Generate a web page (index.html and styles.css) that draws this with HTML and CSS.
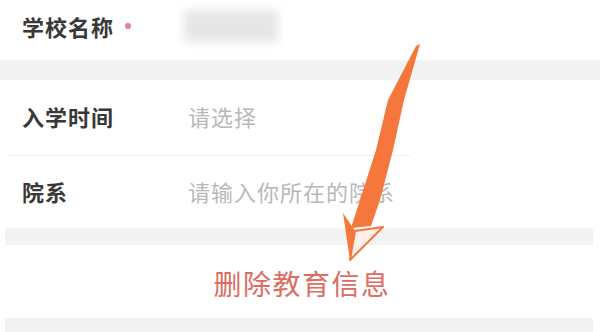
FILE: index.html
```html
<!DOCTYPE html>
<html lang="zh-CN">
<head>
<meta charset="utf-8">
<title>教育信息</title>
<link rel="stylesheet" href="styles.css">
</head>
<body>
<div class="page">
  <div class="row row-school">
    <div class="label">学校名称<span class="req"></span></div>
    <div class="blurred"></div>
  </div>
  <div class="band band-top"></div>
  <div class="row row-time">
    <div class="label">入学时间</div>
    <div class="placeholder">请选择</div>
  </div>
  <div class="divider"></div>
  <div class="row row-dept">
    <div class="label">院系</div>
    <div class="placeholder">请输入你所在的院系</div>
  </div>
  <div class="band band-mid"></div>
  <div class="delete-row">
    <span class="delete">删除教育信息</span>
  </div>
  <div class="band band-bottom"></div>

  <svg class="arrow" width="600" height="332" viewBox="0 0 600 332" xmlns="http://www.w3.org/2000/svg">
    <polygon points="416,46 420,44 404,100 393,150 380,200 371,226 351,228 360,200 376,150 388,100" fill="#f5773b"/>
    <polygon points="343,213 355,231 350,260" fill="#f5773b"/>
    <polygon points="355,231 383,227 350,260" fill="#fff1ea" stroke="#f5773b" stroke-width="2" stroke-linejoin="round"/>
  </svg>
</div>
</body>
</html>
```

FILE: styles.css
```css
html, body {
  margin: 0;
  padding: 0;
  background: #ffffff;
}

.page {
  position: relative;
  width: 600px;
  height: 332px;
  overflow: hidden;
  font-family: "Noto Sans CJK SC", "Noto Sans", sans-serif;
}

.row {
  display: grid;
  grid-template-columns: 166px 1fr;
  align-items: center;
  padding-left: 22px;
}

.row-school {
  height: 52px;
  padding-bottom: 8px;
}

.row-time {
  height: 71px;
  padding-bottom: 4px;
}

.row-dept {
  height: 70px;
  padding-bottom: 2px;
}

.label {
  display: flex;
  align-items: center;
  font-size: 22px;
  letter-spacing: 1px;
  font-weight: 600;
  color: #383838;
  line-height: 30px;
}

.req {
  width: 6px;
  height: 6px;
  border-radius: 50%;
  background: #ec8094;
  margin-left: 11px;
}

.placeholder {
  font-size: 22px;
  letter-spacing: 1px;
  color: #b8b8b8;
  line-height: 30px;
}

.blurred {
  width: 94px;
  height: 32px;
  margin-left: -4px;
  background: #e6e6e6;
  filter: blur(5px);
}

.band {
  background: #f3f3f3;
}

.band-top {
  height: 20px;
}

.band-mid {
  height: 17px;
  margin: 0 7px 0 5px;
}

.band-bottom {
  height: 14px;
  margin: 0 7px 0 5px;
}

.divider {
  height: 1px;
  width: 402px;
  margin-left: 8px;
  background: #efefef;
}

.delete-row {
  height: 73px;
  display: flex;
  align-items: center;
  justify-content: center;
  padding-top: 2px;
  box-sizing: border-box;
}

.delete {
  font-size: 28px;
  letter-spacing: 1.5px;
  color: #dd6c62;
  line-height: 36px;
  margin-left: 4px;
}

.arrow {
  position: absolute;
  left: 0;
  top: 0;
  pointer-events: none;
}
```
